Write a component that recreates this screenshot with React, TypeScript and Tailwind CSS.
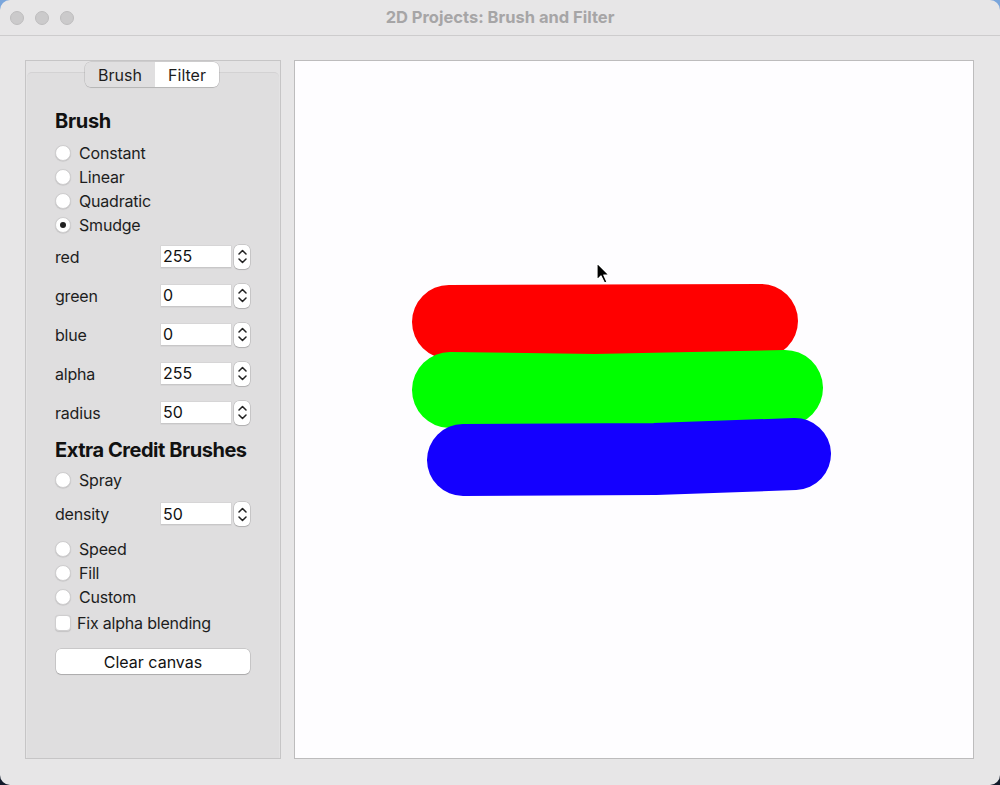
import React from 'react';

const font = { fontFamily: 'Inter, "Liberation Sans", sans-serif' };

const Radio = ({ label, checked = false }: { label: string; checked?: boolean }) => (
  <div className="h-[24px] flex items-center">
    <span className="w-[16px] h-[16px] rounded-full bg-white border border-[#cfcecf] shadow-[0_0.5px_1px_rgba(0,0,0,0.15)] flex items-center justify-center">
      {checked && <span className="w-[6px] h-[6px] rounded-full bg-[#222]" />}
    </span>
    <span className="ml-[8px] text-[16px] text-[#1d1d1d] tracking-[-0.2px]">{label}</span>
  </div>
);

const SpinRow = ({ label, value, className = 'h-[39px]' }: { label: string; value: string; className?: string }) => (
  <div className={`${className} flex items-center`}>
    <span className="w-[106px] text-[16px] text-[#1d1d1d] tracking-[-0.2px]">{label}</span>
    <div className="w-[70px] h-[22px] bg-white border-b border-[#c8c7c8] shadow-[0_0_0_0.5px_rgba(0,0,0,0.08)] flex items-center pl-[2px] text-[16px] text-[#111]">
      {value}
    </div>
    <div className="ml-[3px] w-[16px] h-[24px] bg-white rounded-[5px] shadow-[0_0_0_0.5px_rgba(0,0,0,0.2),0_1px_1px_rgba(0,0,0,0.12)] flex flex-col items-center justify-center gap-[3px]">
      <svg width="9" height="6" viewBox="0 0 9 6"><path d="M1 5 L4.5 1.5 L8 5" fill="none" stroke="#222" strokeWidth="1.5" strokeLinecap="round" strokeLinejoin="round" /></svg>
      <svg width="9" height="6" viewBox="0 0 9 6"><path d="M1 1 L4.5 4.5 L8 1" fill="none" stroke="#222" strokeWidth="1.5" strokeLinecap="round" strokeLinejoin="round" /></svg>
    </div>
  </div>
);

const BrushPanel = () => (
  <div className="relative w-[256px] h-[699px] border border-[#c6c5c6] bg-[#e4e3e4] pt-[11px] flex flex-col">
    {/* tabs */}
    <div className="absolute top-[1px] left-[59px] flex h-[25px] rounded-[6px] overflow-hidden shadow-[0_0_0_0.5px_rgba(0,0,0,0.18),0_0.5px_1px_rgba(0,0,0,0.1)] text-[16px] text-[#1d1d1d]">
      <div className="w-[70px] bg-[#e0dfe0] flex items-center justify-center">Brush</div>
      <div className="w-[64px] bg-white flex items-center justify-center">Filter</div>
    </div>
    <div className="flex-1 mx-[1px] bg-[#dfdedf] rounded-t-[5px] border-t border-[#d3d2d3] pl-[28px] pt-[35px] flex flex-col">
      <div className="h-[26px] flex items-center text-[20px] font-bold text-[#111] tracking-[-0.3px]">Brush</div>
      <div className="mt-[7px]">
        <Radio label="Constant" />
        <Radio label="Linear" />
        <Radio label="Quadratic" />
        <Radio label="Smudge" checked />
      </div>
      <SpinRow label="red" value="255" />
      <SpinRow label="green" value="0" />
      <SpinRow label="blue" value="0" />
      <SpinRow label="alpha" value="255" />
      <SpinRow label="radius" value="50" />
      <div className="h-[35px] flex items-center text-[20px] font-bold text-[#111] tracking-[-0.45px]">Extra Credit Brushes</div>
      <div className="mt-[1px]">
        <Radio label="Spray" />
      </div>
      <SpinRow label="density" value="50" className="h-[44px]" />
      <div className="mt-[1px]">
        <Radio label="Speed" />
        <Radio label="Fill" />
        <Radio label="Custom" />
      </div>
      <div className="mt-[2px] h-[24px] flex items-center">
        <span className="w-[16px] h-[16px] rounded-[4px] bg-white border border-[#cfcecf] shadow-[0_0.5px_1px_rgba(0,0,0,0.12)]" />
        <span className="ml-[6px] text-[16px] text-[#1d1d1d] tracking-[-0.2px]">Fix alpha blending</span>
      </div>
      <button className="mt-[14px] ml-[1px] w-[194px] h-[25px] bg-white rounded-[5px] shadow-[0_0_0_0.5px_rgba(0,0,0,0.2),0_1px_1px_rgba(0,0,0,0.15)] text-[16px] text-[#111] flex items-center justify-center">
        Clear canvas
      </button>
    </div>
  </div>
);

const Canvas = () => (
  <div className="relative flex-1 h-[699px] border border-[#bdbcbd] bg-[#fefdff]">
    <svg className="absolute inset-0" width="680" height="698" viewBox="0 0 680 698">
      <g strokeLinecap="round" strokeLinejoin="round" fill="none">
        <path d="M154 261 L466 260" stroke="#ff0000" strokeWidth="74" />
        <path d="M155 329 L300 331 L490 327" stroke="#00ff00" strokeWidth="76" />
        <path d="M168 399 L360 398 L500 393" stroke="#1400ff" strokeWidth="72" />
      </g>
      <g transform="translate(302 202)">
        <path d="M0 0 L0 17 L4 13 L7.5 20 L10 19 L6.8 12 L12 12 Z" fill="#000" stroke="#fff" strokeWidth="1.2" strokeLinejoin="round" />
      </g>
    </svg>
  </div>
);

export default function App() {
  return (
    <div className="w-[1000px] h-[785px] bg-gradient-to-b from-[#7aa6dc] to-[#121a2a]" style={font}>
      <div className="w-[1000px] h-[785px] bg-[#e7e6e7] rounded-[10px] overflow-hidden flex flex-col">
        <div className="h-[36px] border-b border-[#cdcccd] grid grid-cols-[1fr_auto_1fr] items-center">
          <div className="flex items-center gap-[11px] pl-[10px]">
            <span className="w-[14px] h-[14px] rounded-full bg-[#cbcacb] border border-[#bebdbe]" />
            <span className="w-[14px] h-[14px] rounded-full bg-[#cbcacb] border border-[#bebdbe]" />
            <span className="w-[14px] h-[14px] rounded-full bg-[#cbcacb] border border-[#bebdbe]" />
          </div>
          <div className="text-[16.5px] font-bold text-[#a6a5a6]">2D Projects: Brush and Filter</div>
          <div />
        </div>
        <div className="flex pl-[25px] pr-[26px] pt-[24px] gap-[13px]">
          <BrushPanel />
          <Canvas />
        </div>
      </div>
    </div>
  );
}
